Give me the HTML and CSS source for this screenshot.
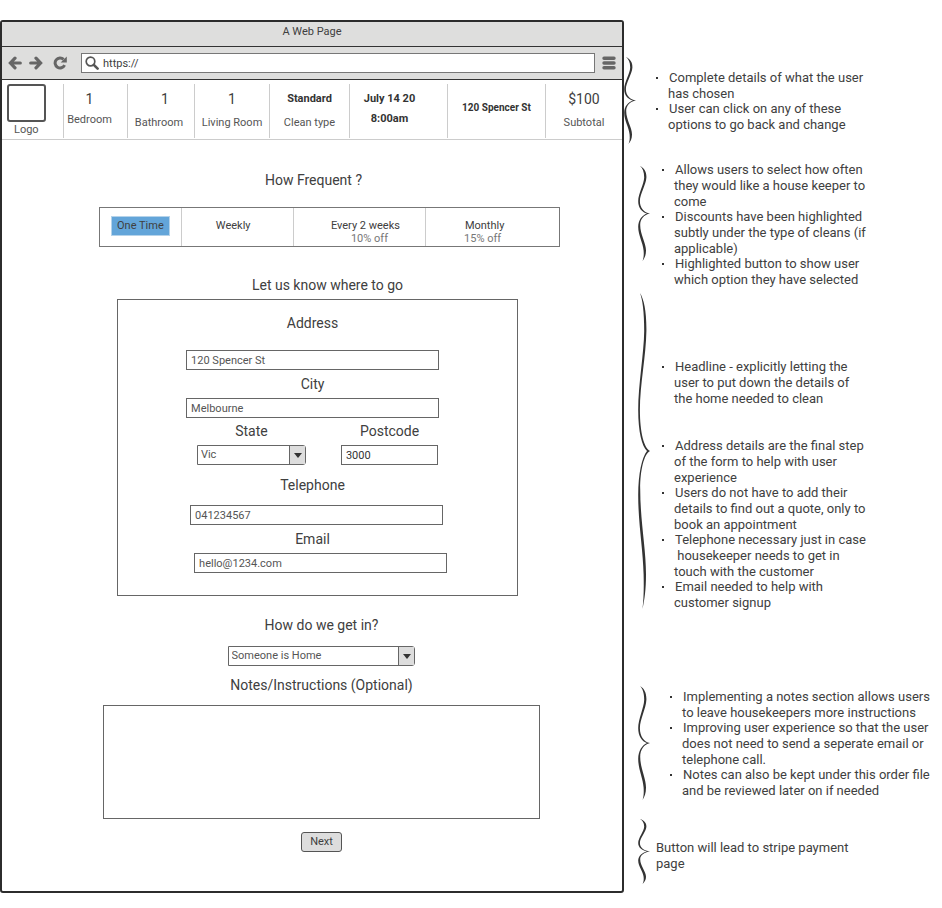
FILE: index.html
```html
<!DOCTYPE html>
<html lang="en">
<head>
<meta charset="utf-8">
<title>A Web Page</title>
<link rel="stylesheet" href="styles.css">
</head>
<body>
<svg class="defs" aria-hidden="true">
  <symbol id="brace" viewBox="0 0 12 100" preserveAspectRatio="none">
    <path d="M2 0C6 2 8.6 6 8.4 12C8 20 1.9 29 1.9 37C1.9 44 6 49 12 50C6 51 2.2 56 2.2 62C2.2 72 8 81 8 89C8 94 6.5 97 4.5 100C5.6 97 6 94 5.6 89C5 81 .2 73 .2 64C.2 57 4 52 9 50C4 48.500 .2 44 .2 37C.2 29 6 19 6.200 12C6.200 6 4.500 2 2 0Z"/>
  </symbol>
</svg>
<div class="layout">
  <div class="browser">
    <header>
      <div class="titlebar">A Web Page</div>
      <div class="toolbar">
        <button class="tool" aria-label="Back"><svg viewBox="0 0 14 14"><path d="M7 2.200L2.400 7L7 11.800M3 7H12.300" fill="none" stroke="currentColor" stroke-width="3.200" stroke-linecap="round"/></svg></button>
        <button class="tool" aria-label="Forward"><svg viewBox="0 0 14 14"><path d="M7 2.200L11.600 7L7 11.800M11 7H1.700" fill="none" stroke="currentColor" stroke-width="3.200" stroke-linecap="round"/></svg></button>
        <button class="tool tool-reload" aria-label="Reload"><svg viewBox="0 0 14 14"><path d="M10.600 3.400A5 5 0 1 0 11.600 9.200" fill="none" stroke="currentColor" stroke-width="3"/><path d="M13.800 .6V6.600H7.700Z" fill="currentColor"/></svg></button>
        <div class="url">
          <svg viewBox="0 0 14 14" aria-hidden="true"><circle cx="5.500" cy="5.500" r="4.300" fill="none" stroke="currentColor" stroke-width="1.700"/><path d="M8.800 8.800L12.600 12.600" stroke="currentColor" stroke-width="2.600" stroke-linecap="round"/></svg>
          <input type="text" value="https://" aria-label="Web address">
        </div>
        <button class="tool" aria-label="Menu"><svg viewBox="0 0 14 14"><path d="M2 2.200H12M2 7H12M2 11.800H12" stroke="currentColor" stroke-width="3.400" stroke-linecap="round"/></svg></button>
      </div>
    </header>
    <nav class="summary" aria-label="Booking summary">
      <a class="logo" href="#"><span class="logo-box"></span>Logo</a>
      <a class="cell cell-bedroom" href="#"><span class="count">1</span><span class="caption">Bedroom</span></a>
      <a class="cell cell-bathroom" href="#"><span class="count">1</span><span class="caption">Bathroom</span></a>
      <a class="cell" href="#"><span class="count">1</span><span class="caption">Living Room</span></a>
      <a class="cell" href="#"><strong>Standard</strong><span class="caption">Clean type</span></a>
      <a class="cell cell-date" href="#"><strong>July 14 20</strong><strong>8:00am</strong></a>
      <a class="cell cell-address" href="#"><strong>120 Spencer St</strong></a>
      <a class="cell" href="#"><span class="count">$100</span><span class="caption">Subtotal</span></a>
    </nav>
    <main>
      <h2>How Frequent ?</h2>
      <div class="frequency">
        <button class="option"><span class="selected">One Time</span></button>
        <button class="option option-weekly">Weekly</button>
        <button class="option option-fortnightly">Every 2 weeks<small>10% off</small></button>
        <button class="option option-monthly">Monthly<small>15% off</small></button>
      </div>
      <form>
        <h2 class="where">Let us know where to go</h2>
        <div class="panel">
          <label class="spaced" for="address">Address</label>
          <input id="address" type="text" value="120 Spencer St">
          <label for="city">City</label>
          <input id="city" type="text" value="Melbourne">
          <div class="pair">
            <div class="field">
              <label for="state">State</label>
              <div class="select"><select id="state"><option>Vic</option></select></div>
            </div>
            <div class="field">
              <label for="postcode">Postcode</label>
              <input id="postcode" class="dark" type="text" value="3000">
            </div>
          </div>
          <label class="phone" for="phone">Telephone</label>
          <input id="phone" class="indent" type="tel" value="041234567">
          <label for="email">Email</label>
          <input id="email" class="indent-more" type="email" value="hello@1234.com">
        </div>
        <div class="access">
          <label for="entry">How do we get in?</label>
          <div class="select select-entry"><select id="entry"><option>Someone is Home</option></select></div>
          <label for="notes">Notes/Instructions (Optional)</label>
          <textarea id="notes"></textarea>
          <button class="next" type="button">Next</button>
        </div>
      </form>
    </main>
  </div>
  <aside>
    <section class="note note-summary">
      <svg class="brace"><use href="#brace"/></svg>
      <ul>
        <li>Complete details of what the user<br>has chosen</li>
        <li>User can click on any of these<br>options to go back and change</li>
      </ul>
    </section>
    <section class="note note-frequency">
      <svg class="brace"><use href="#brace"/></svg>
      <ul>
        <li>Allows users to select how often<br>they would like a house keeper to<br>come</li>
        <li>Discounts have been highlighted<br>subtly under the type of cleans (if<br>applicable)</li>
        <li>Highlighted button to show user<br>which option they have selected</li>
      </ul>
    </section>
    <section class="note note-address">
      <svg class="brace"><use href="#brace"/></svg>
      <ul>
        <li class="headline">Headline - explicitly letting the<br>user to put down the details of<br>the home needed to clean</li>
        <li>Address details are the final step<br>of the form to help with user<br>experience</li>
        <li>Users do not have to add their<br>details to find out a quote, only to<br>book an appointment</li>
        <li>Telephone necessary just in case<br>&nbsp;housekeeper needs to get in<br>touch with the customer</li>
        <li>Email needed to help with<br>customer signup</li>
      </ul>
    </section>
    <section class="note note-notes">
      <svg class="brace"><use href="#brace"/></svg>
      <ul>
        <li>Implementing a notes section allows users<br>to leave housekeepers more instructions</li>
        <li>Improving user experience so that the user<br>does not need to send a seperate email or<br>telephone call.</li>
        <li>Notes can also be kept under this order file<br>and be reviewed later on if needed</li>
      </ul>
    </section>
    <section class="note note-next">
      <svg class="brace"><use href="#brace"/></svg>
      <p>Button will lead to stripe payment<br>page</p>
    </section>
  </aside>
</div>
</body>
</html>
```
FILE: styles.css
```css
* { box-sizing: border-box; }

body {
  margin: 0;
  background: #fff;
  color: #404040;
  font-family: Roboto, "Liberation Sans", sans-serif;
  font-size: 11px;
  line-height: 16px;
}

button, input, select, textarea {
  font: inherit;
  color: inherit;
  margin: 0;
}

button { cursor: pointer; }
a { color: inherit; text-decoration: none; }
.defs { position: absolute; width: 0; height: 0; }

.layout {
  display: grid;
  grid-template-columns: 624fr 318fr;
  align-items: start;
}

/* Browser frame */
.browser {
  margin-top: 20px;
  border: 2px solid #2c2c2c;
  border-radius: 3px;
  min-width: 0;
}

.titlebar {
  height: 25px;
  padding-top: 2px;
  background: #dededd;
  border-bottom: 1px solid #333;
  text-align: center;
}

.toolbar {
  display: flex;
  align-items: center;
  gap: 7px;
  height: 33px;
  padding: 0 6px;
  background: #dededd;
  border-bottom: 1px solid #333;
}

.tool {
  flex: none;
  width: 14px;
  height: 14px;
  padding: 0;
  border: 0;
  background: none;
  color: #666;
}

.tool svg { display: block; width: 14px; height: 14px; }
.tool-reload { margin: 0 7px 0 3px; }

.url {
  flex: 1;
  display: flex;
  align-items: center;
  gap: 4px;
  height: 20px;
  padding-left: 3px;
  border: 1px solid #777;
  background: #fff;
}

.url svg { flex: none; width: 14px; height: 14px; color: #555; }

.url input {
  flex: 1;
  min-width: 0;
  padding: 2px 0 0;
  border: 0;
  outline: 0;
}

/* Booking summary */
.summary {
  display: grid;
  grid-template-columns: 61fr 64fr 67fr 75fr 80fr 98fr 98fr 77fr;
  height: 60px;
  padding: 4px 0;
  border-bottom: 1px solid #ccc;
}

.logo {
  padding-left: 5px;
  display: flex;
  flex-direction: column;
  align-items: flex-start;
  color: #555;
  text-indent: 7px;
}

.logo-box {
  width: 39px;
  height: 38px;
  border: 2px solid #555;
  border-radius: 3px;
}

.cell {
  display: flex;
  flex-direction: column;
  align-items: center;
  gap: 8px;
  padding-top: 7px;
  border-left: 1px solid #ccc;
  white-space: nowrap;
}

.cell-bedroom { padding-right: 12px; gap: 5px; }
.cell-bathroom { padding-right: 4px; }
.cell-bathroom .count { padding-left: 12px; }
.cell-date { padding-right: 18px; gap: 4px; }
.cell-address { padding-top: 16px; font-size: 10px; }
.count { font-size: 14px; }
.caption { color: #555; }
strong { color: #333; }

/* Booking form */
main { padding: 30px 62px 39px 97px; }

h2, label {
  margin: 0;
  font-size: 14px;
  font-weight: 400;
  line-height: 20px;
  text-align: center;
  white-space: nowrap;
}

h2 { padding-right: 32px; }
.where { padding-right: 4px; }

.frequency {
  display: grid;
  grid-template-columns: 81fr 112fr 133fr 134fr;
  height: 40px;
  margin: 17px 0 28px;
  border: 1px solid #777;
}

.option {
  display: flex;
  flex-direction: column;
  align-items: center;
  padding: 11px 0 0;
  border: 0;
  border-left: 1px solid #ccc;
  background: none;
  line-height: 14px;
}

.option:first-child { border-left: 0; padding-top: 8px; }
.option-weekly { padding-right: 8px; }
.option-fortnightly { padding-left: 12px; }
.option-fortnightly small { padding-left: 8px; }
.option-monthly { padding-right: 16px; }
.option-monthly small { padding-right: 4px; }
.option small { font-size: 11px; line-height: 12px; color: #777; }

.selected {
  padding: 2px 5px;
  border: 1px solid #b5d3ea;
  background: #63a5d9;
}

.panel {
  display: flex;
  flex-direction: column;
  align-items: center;
  gap: 4px;
  margin: 4px 42px 0 18px;
  padding: 13px 10px 22px 0;
  border: 1px solid #666;
}

.panel input, select {
  width: 100%;
  height: 20px;
  padding: 0 4px;
  border: 1px solid #666;
  border-radius: 0;
  background: #fff;
  color: #555;
  line-height: 18px;
}

.panel > input { width: 65%; }
.panel input.dark { color: #333; }
.spaced { margin-bottom: 13px; }
.phone { margin: 6px 0; }
.panel .indent { margin-left: 8px; }
.panel .indent-more { margin-left: 16px; }

.pair {
  display: grid;
  grid-template-columns: 110fr 98fr;
  gap: 35px;
  width: 62%;
  margin: -1px 0 0 10px;
}

.field { display: flex; flex-direction: column; gap: 4px; }

.select { position: relative; }
select { appearance: none; border-radius: 0 3px 3px 0; padding-left: 3px; }

.select::after {
  content: "";
  position: absolute;
  inset: 1px 1px 1px auto;
  width: 15px;
  border-left: 1px solid #666;
  background: #ddd;
  pointer-events: none;
}

.select::before {
  content: "";
  position: absolute;
  z-index: 1;
  top: 8px;
  right: 4px;
  border: 4px solid transparent;
  border-top: 5px solid #333;
  border-bottom: 0;
  pointer-events: none;
}

.access {
  display: flex;
  flex-direction: column;
  align-items: center;
  padding: 19px 20px 0 4px;
}

.select-entry { width: 43%; margin: 11px 0 9px; }

textarea {
  width: 100%;
  height: 114px;
  margin: 10px 0 13px;
  border: 1px solid #666;
  resize: none;
}

.next {
  height: 20px;
  padding: 0 8px;
  border: 1px solid #555;
  border-radius: 3px;
  background: #ddd;
}

/* Annotations */
aside { padding-top: 57px; font-size: 13px; }

.note { display: flex; align-items: flex-start; padding-left: 14px; }
.brace { flex: none; width: 12px; fill: #333; }
.note ul { margin: 0; padding: 0 0 0 12px; list-style: none; }
.note li { position: relative; padding-left: 12px; margin-bottom: -1px; text-indent: 1px; white-space: nowrap; }
.note p { margin: 0; padding: 21px 0 0 6px; white-space: nowrap; }

.note li::before {
  content: "";
  position: absolute;
  left: 0;
  top: 7px;
  width: 2px;
  height: 2px;
  background: #333;
}

.note-summary { padding-left: 0; margin-bottom: 18px; }
.note-summary ul { padding: 13px 0 0 20px; }
.note-summary .brace { height: 87px; }
.note-frequency { height: 131px; }
.note-frequency .brace { height: 95px; margin-top: 4px; }
.note-address { margin-bottom: 76px; }
.note-address .brace { height: 316px; }
.note-address ul { padding-top: 66px; }
.note-address .headline { margin-bottom: 31px; }
.note-notes { margin-bottom: 19px; }
.note-notes .brace { height: 114px; }
.note-notes ul { padding: 3px 0 0 20px; }
.note-next .brace { height: 65px; }
```
